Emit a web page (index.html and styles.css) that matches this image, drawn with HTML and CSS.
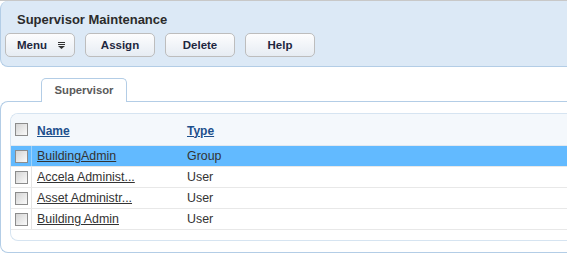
FILE: index.html
```html
<!DOCTYPE html>
<html lang="en">
<head>
    <meta charset="UTF-8">
    <title>Supervisor Maintenance</title>
    <link rel="stylesheet" href="styles.css">
</head>
<body>
    <div class="page">
        <div class="toolbar">
            <div class="title">Supervisor Maintenance</div>
            <div class="actions">
                <button class="btn btn-menu">Menu
                    <svg width="7" height="7" viewBox="0 0 7 7"><rect x="0" y="0" width="7" height="1" fill="#333"/><rect x="0" y="2" width="7" height="1" fill="#333"/><polygon points="0,4 7,4 3.5,7" fill="#333"/></svg>
                </button>
                <button class="btn">Assign</button>
                <button class="btn">Delete</button>
                <button class="btn">Help</button>
            </div>
        </div>

        <div class="tabs">
            <div class="tab">Supervisor</div>
        </div>

        <div class="panel">
            <div class="grid">
                <div class="row head">
                    <div class="cell cell-check"><span class="check"></span></div>
                    <div class="cell cell-name"><a href="#">Name</a></div>
                    <div class="cell cell-type"><a href="#">Type</a></div>
                </div>
                <div class="row selected">
                    <div class="cell cell-check"><span class="check"></span></div>
                    <div class="cell cell-name"><a href="#">BuildingAdmin</a></div>
                    <div class="cell cell-type">Group</div>
                </div>
                <div class="row">
                    <div class="cell cell-check"><span class="check"></span></div>
                    <div class="cell cell-name"><a href="#">Accela Administ...</a></div>
                    <div class="cell cell-type">User</div>
                </div>
                <div class="row">
                    <div class="cell cell-check"><span class="check"></span></div>
                    <div class="cell cell-name"><a href="#">Asset Administr...</a></div>
                    <div class="cell cell-type">User</div>
                </div>
                <div class="row">
                    <div class="cell cell-check"><span class="check"></span></div>
                    <div class="cell cell-name"><a href="#">Building Admin</a></div>
                    <div class="cell cell-type">User</div>
                </div>
            </div>
        </div>
    </div>
</body>
</html>
```

FILE: styles.css
```css
body {
    margin: 0;
    font-family: "Liberation Sans", Arial, sans-serif;
    font-size: 12px;
    color: #333;
    background: #fff;
}
.page {
    border-top: 1px solid #c8c8c8;
}
.toolbar {
    background: #dce9f6;
    border-left: 1px solid #b3cde6;
    border-bottom: 1px solid #b3cde6;
    border-radius: 8px 0 0 8px;
    padding: 11px 0 9px 4px;
}
.title {
    font-size: 13px;
    font-weight: bold;
    line-height: 16px;
    padding-left: 12px;
    color: #2b2b2b;
}
.actions {
    display: flex;
    gap: 10px;
    margin-top: 5px;
}
.btn {
    width: 70px;
    height: 24px;
    padding: 0;
    border: 1px solid #bdbdbd;
    border-radius: 5px;
    background: linear-gradient(#fdfdfe, #e6ecf3);
    font-family: "Liberation Sans", Arial, sans-serif;
    font-size: 11.5px;
    font-weight: bold;
    color: #1e2740;
    cursor: pointer;
}
.btn-menu {
    display: flex;
    align-items: center;
    padding-left: 11px;
    gap: 11px;
}
.tabs {
    display: flex;
    margin-top: 11px;
    padding-left: 41px;
}
.tab {
    position: relative;
    width: 84px;
    height: 23px;
    line-height: 23px;
    margin-bottom: -1px;
    border: 1px solid #b3cde6;
    border-bottom: none;
    border-radius: 5px 5px 0 0;
    background: #fff;
    text-align: center;
    font-size: 11.3px;
    font-weight: bold;
    color: #5a5a5a;
}
.panel {
    border-top: 1px solid #b3cde6;
    border-left: 1px solid #b3cde6;
    border-bottom: 1px solid #b3cde6;
    border-radius: 8px 0 0 8px;
    padding: 11px 0 11px 9px;
}
.grid {
    border-top: 1px solid #d6e4f1;
    border-left: 1px solid #d6e4f1;
    border-bottom: 1px solid #d6e4f1;
    border-radius: 8px 0 0 8px;
    padding-bottom: 10px;
    overflow: hidden;
}
.row {
    display: flex;
    height: 20px;
    border-bottom: 1px solid #e8e8e8;
    font-size: 12.4px;
}
.row.head {
    height: 31px;
    background: #f4f8fc;
    border-bottom: 1px solid #e2e9f0;
    font-size: 12px;
}
.row.selected {
    background: #62baff;
}
.cell {
    display: flex;
    align-items: center;
}
.cell-check {
    width: 21px;
    padding-left: 4px;
    box-sizing: border-box;
    border-right: 1px solid #e4e4e4;
}
.head .cell-check {
    border-right: none;
}
.selected .cell-check {
    border-right-color: #9cd2fb;
}
.cell-name {
    width: 150px;
    padding-left: 5px;
    box-sizing: border-box;
}
.cell-type {
    padding-left: 5px;
}
.check {
    width: 11px;
    height: 11px;
    border: 1px solid #8c8c8c;
    background: linear-gradient(135deg, #d4d4d4, #fafafa);
}
.cell a {
    color: #333;
}
.head .cell a {
    color: #1d4f8c;
    font-weight: bold;
    padding-top: 2px;
}
```
